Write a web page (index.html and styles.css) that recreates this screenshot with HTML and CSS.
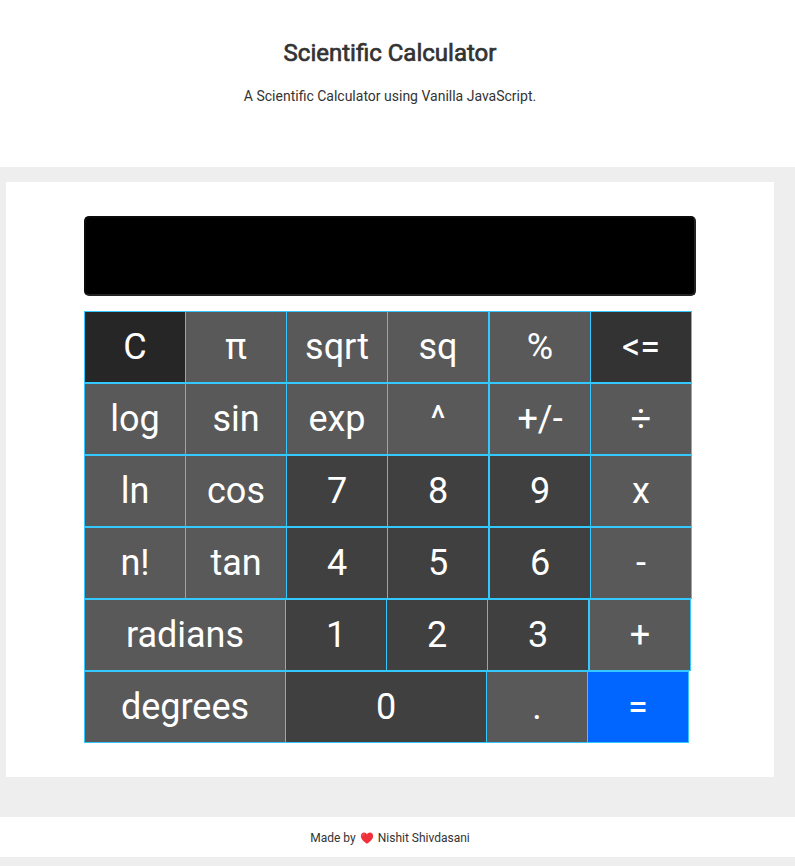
FILE: index.html
```html
<!DOCTYPE html>
<html lang="en">
<head>
<meta charset="utf-8">
<title>Scientific Calculator</title>
<link rel="stylesheet" href="styles.css">
</head>
<body>
<header class="header">
  <h1 class="title">Scientific Calculator</h1>
  <p class="subtitle">A Scientific Calculator using Vanilla JavaScript.</p>
</header>
<main class="calculator">
  <div class="display"></div>
  <div class="row">
    <button class="key clear">C</button><button class="key">π</button><button class="key">sqrt</button><button class="key">sq</button><button class="key">%</button><button class="key back">&lt;=</button>
  </div>
  <div class="row">
    <button class="key">log</button><button class="key">sin</button><button class="key">exp</button><button class="key">^</button><button class="key">+/-</button><button class="key">÷</button>
  </div>
  <div class="row">
    <button class="key">ln</button><button class="key">cos</button><button class="key num">7</button><button class="key num">8</button><button class="key num">9</button><button class="key">x</button>
  </div>
  <div class="row">
    <button class="key">n!</button><button class="key">tan</button><button class="key num">4</button><button class="key num">5</button><button class="key num">6</button><button class="key">-</button>
  </div>
  <div class="row">
    <button class="key wide">radians</button><button class="key num">1</button><button class="key num">2</button><button class="key num">3</button><button class="key">+</button>
  </div>
  <div class="row">
    <button class="key wide">degrees</button><button class="key num wide">0</button><button class="key">.</button><button class="key equals">=</button>
  </div>
</main>
<footer class="footer">
  <span>Made by</span>
  <svg class="heart" viewBox="0 0 13 12" aria-hidden="true"><path d="M6.5 11.7C3.3 9.6.4 7.2.4 4 .4 2 1.8.6 3.5.6c1.300 0 2.400.7 3 1.900C7.100 1.300 8.200.6 9.500.6c1.700 0 3.100 1.400 3.100 3.400 0 3.200-2.900 5.600-6.100 7.700z" fill="#f0303a"/><path d="M2 3.800C2 2.700 2.700 2 3.700 2" fill="none" stroke="#fa7075" stroke-width=".8" stroke-linecap="round"/></svg>
  <span>Nishit Shivdasani</span>
</footer>
</body>
</html>
```
FILE: styles.css
```css
* {
  box-sizing: border-box;
}

body {
  margin: 0;
  background: #eee;
  color: #333;
  font-family: Roboto, "Liberation Sans", sans-serif;
}

.header {
  height: 167px;
  padding: 39px 15px 0 0;
  background: #fff;
  text-align: center;
}

.title {
  margin: 0;
  font-size: 24px;
  font-weight: 400;
  line-height: 28px;
  -webkit-text-stroke: 0.7px #333;
}

.subtitle {
  margin: 19px 0 0;
  font-size: 14px;
  line-height: 20px;
}

.calculator {
  width: 768px;
  height: 595px;
  margin: 15px 0 40px 6px;
  padding: 34px 78px;
  background: #fff;
}

.display {
  height: 80px;
  margin-bottom: 15px;
  background: #000;
  border: 2px solid;
  border-color: #0a0a0a #222 #222 #0a0a0a;
  border-radius: 5px;
}

.row {
  display: flex;
  height: 72px;
}

.key {
  flex: none;
  width: 102px;
  height: 72px;
  margin: 0 0 0 -1px;
  padding: 0;
  border: 1px solid #33c9ff;
  background: #595959;
  color: #fff;
  font-family: inherit;
  font-size: 36px;
  line-height: 70px;
  text-align: center;
}

.key:first-child,
.key:nth-child(5) {
  margin-left: 0;
}

.wide {
  width: 202px;
}

.num {
  background: #404040;
}

.clear {
  background: #262626;
}

.back {
  background: #333;
}

.equals {
  background: #06f;
}

.footer {
  display: flex;
  justify-content: center;
  align-items: center;
  gap: 4px;
  height: 40px;
  padding: 1px 15px 0 0;
  background: #fff;
  font-size: 12px;
  line-height: 20px;
}

.heart {
  width: 14px;
  height: 12px;
}
```
